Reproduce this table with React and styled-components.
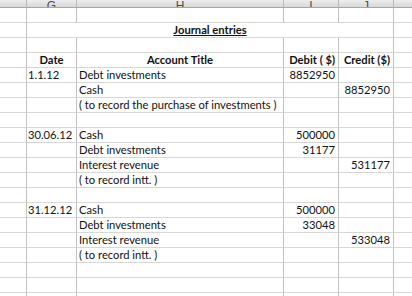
import React from 'react';
import styled, { createGlobalStyle } from 'styled-components';

const Global = createGlobalStyle`
  html, body { margin: 0; padding: 0; background: #fff; }
  body { font-family: Lato, "Liberation Sans", sans-serif; }
`;

const Sheet = styled.div`
  width: 412px;
  height: 296px;
  overflow: hidden;
  background: #fff;
  display: grid;
  grid-template-columns: 27px 50px 207px 55px 55px 1fr;
  grid-template-rows: 8px;
  grid-auto-rows: 15px;
`;

const ColHead = styled.div`
  box-sizing: border-box;
  height: 8px;
  overflow: hidden;
  background: linear-gradient(#ececec, #d9d9d9);
  border-right: ${p => (p.$last ? 'none' : '1px solid #b9b9b9')};
  border-bottom: 1px solid #a6a6a6;
  text-align: center;
  color: #4a4a4a;
  font-family: "Liberation Sans", sans-serif;
  font-size: 12px;
  line-height: 12px;
`;

const HeadLetter = styled.span`
  display: inline-block;
  margin-top: -7px;
`;

const Cell = styled.div`
  box-sizing: border-box;
  display: flex;
  align-items: center;
  justify-content: ${p =>
    p.$align === 'right' ? 'flex-end' : p.$align === 'center' ? 'center' : 'flex-start'};
  padding: 0 ${p => (p.$align === 'right' ? 3 : 0)}px 0 ${p => p.$pl ?? 0}px;
  border-right: ${p => (p.$last ? 'none' : '1px solid #c2c2c2')};
  border-bottom: 1px solid #d7d7d7;
  font-size: 11.2px;
  line-height: 14px;
  font-weight: ${p => (p.$bold ? 700 : 400)};
  color: #111;
  white-space: nowrap;
`;

const TitleCell = styled(Cell)`
  grid-column: 2 / 6;
  justify-content: center;
`;

const Underlined = styled.span`
  text-decoration: underline;
  text-underline-offset: 1px;
`;

const rows = [
  {},
  { title: 'Journal entries' },
  {},
  { head: true, date: 'Date', account: 'Account Title', debit: 'Debit ( $)', credit: 'Credit ($)' },
  { date: '1.1.12', account: 'Debt investments', debit: '8852950' },
  { account: 'Cash', credit: '8852950' },
  { account: '( to record the purchase of investments )' },
  {},
  { date: '30.06.12', account: 'Cash', debit: '500000' },
  { account: 'Debt investments', debit: '31177' },
  { account: 'Interest revenue', credit: '531177' },
  { account: '( to record intt. )' },
  {},
  { date: '31.12.12', account: 'Cash', debit: '500000' },
  { account: 'Debt investments', debit: '33048' },
  { account: 'Interest revenue', credit: '533048' },
  { account: '( to record intt. )' },
  {},
  {},
  {},
];

const letters = ['', 'G', 'H', 'I', 'J', ''];

export default function App() {
  return (
    <>
      <Global />
      <Sheet>
        {letters.map((l, i) => (
          <ColHead key={'h' + i} $last={i === 5}>
            <HeadLetter>{l}</HeadLetter>
          </ColHead>
        ))}
        {rows.map((r, i) => {
          if (r.title) {
            return (
              <React.Fragment key={i}>
                <Cell />
                <TitleCell $bold>
                  <Underlined>{r.title}</Underlined>
                </TitleCell>
                <Cell $last />
              </React.Fragment>
            );
          }
          return (
            <React.Fragment key={i}>
              <Cell />
              <Cell $bold={r.head} $align={r.head ? 'center' : 'left'} $pl={r.head ? 0 : 1}>
                {r.date}
              </Cell>
              <Cell $bold={r.head} $align={r.head ? 'center' : 'left'} $pl={r.head ? 0 : 2}>
                {r.account}
              </Cell>
              <Cell $bold={r.head} $align="right">{r.debit}</Cell>
              <Cell $bold={r.head} $align="right">{r.credit}</Cell>
              <Cell $last />
            </React.Fragment>
          );
        })}
      </Sheet>
    </>
  );
}
